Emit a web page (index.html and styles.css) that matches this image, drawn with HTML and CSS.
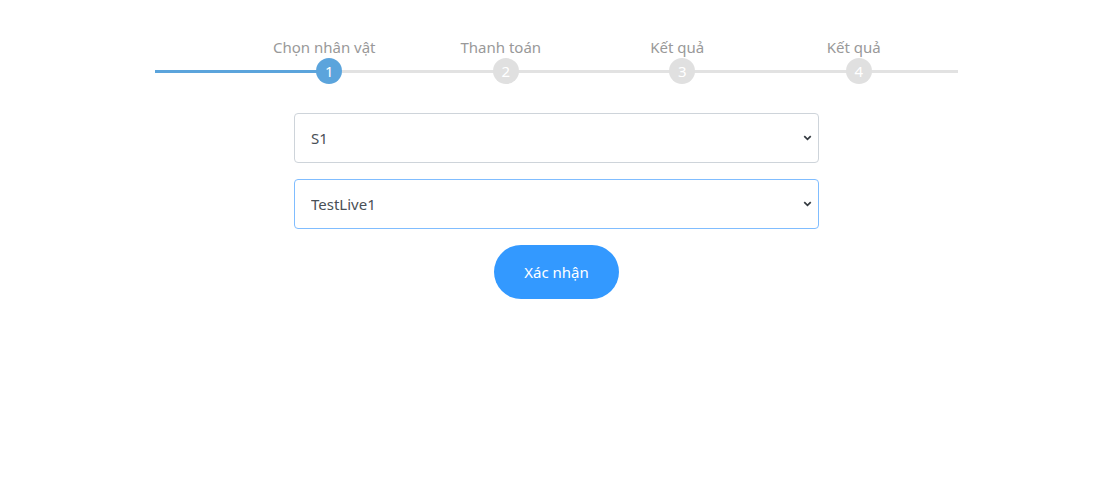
FILE: index.html
```html
<!DOCTYPE html>
<html lang="vi">
<head>
<meta charset="utf-8">
<title>Chọn nhân vật</title>
<link rel="stylesheet" href="styles.css">
</head>
<body>
<div class="page">
  <div class="stepper">
    <div class="labels">
      <div class="step-label">Chọn nhân vật</div>
      <div class="step-label">Thanh toán</div>
      <div class="step-label">Kết quả</div>
      <div class="step-label">Kết quả</div>
    </div>
    <div class="track">
      <div class="step"><span class="dot active">1</span></div>
      <div class="step"><span class="dot">2</span></div>
      <div class="step"><span class="dot">3</span></div>
      <div class="step"><span class="dot">4</span></div>
    </div>
  </div>
  <form class="form">
    <select class="field">
      <option>S1</option>
    </select>
    <select class="field focused">
      <option>TestLive1</option>
    </select>
    <button type="button" class="confirm">Xác nhận</button>
  </form>
</div>
</body>
</html>
```
FILE: styles.css
```css
* { box-sizing: border-box; }
html, body { margin: 0; padding: 0; background: #fff; }
body {
  font-family: "Noto Sans", "Open Sans", sans-serif;
  color: #495057;
}
.page {
  width: 1116px;
  padding-top: 37px;
}
.stepper {
  margin-left: 155px;
  width: 803px;
}
.labels, .track {
  display: flex;
  padding-left: 86px;
}
.labels { padding-left: 81px; }
.step-label {
  width: 176.5px;
  text-align: center;
  font-size: 15px;
  line-height: 20px;
  color: #999;
  height: 21px;
}
.track {
  height: 26px;
  background:
    linear-gradient(#5ba4dc, #5ba4dc) 0 11.5px / 174px 3px no-repeat,
    linear-gradient(#e2e2e2, #e2e2e2) 0 11.5px / 100% 3px no-repeat;
}
.step {
  width: 176.5px;
  display: flex;
  justify-content: center;
}
.dot {
  width: 26px;
  height: 26px;
  border-radius: 50%;
  background: #e0e0e0;
  color: #fff;
  font-size: 15px;
  line-height: 26px;
  text-align: center;
}
.dot.active { background: #5ba4dc; }
.form {
  width: 525px;
  margin: 29px 0 0 294px;
  display: flex;
  flex-direction: column;
  align-items: center;
  gap: 16px;
}
.field {
  width: 100%;
  height: 50px;
  appearance: none;
  -webkit-appearance: none;
  border: 1px solid #ced4da;
  border-radius: 4px;
  padding: 0 16px;
  font-family: inherit;
  font-size: 15px;
  color: #495057;
  background: #fff url("data:image/svg+xml;utf8,<svg xmlns='http://www.w3.org/2000/svg' width='10' height='7' viewBox='0 0 10 7'><path d='M1.2 1.3 L5 5 L8.8 1.3' fill='none' stroke='%23343a40' stroke-width='2'/></svg>") no-repeat right 6px center / 9px 6px;
  outline: none;
}
.field.focused { border-color: #80bdff; }
.confirm {
  width: 125px;
  height: 54px;
  border: none;
  border-radius: 27px;
  background: #3399ff;
  color: #fff;
  font-family: inherit;
  font-size: 15px;
  cursor: pointer;
}
```
